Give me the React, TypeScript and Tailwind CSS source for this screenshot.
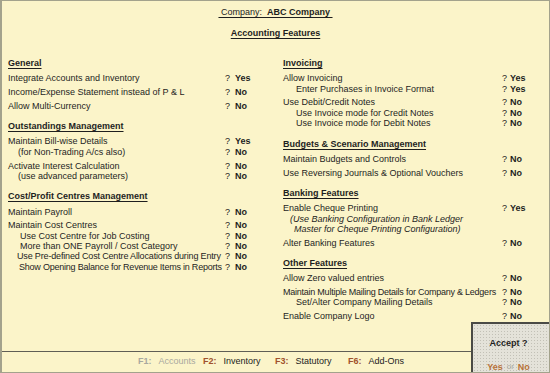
type Row = {
  label: string;
  value?: string;
  indent?: string;
  extra?: string;
};

type Section = { title: string; groups: Row[][] };

const leftSections: Section[] = [
  {
    title: "General",
    groups: [
      [{ label: "Integrate Accounts and Inventory", value: "Yes" }],
      [{ label: "Income/Expense Statement instead of P & L", value: "No" }],
      [{ label: "Allow Multi-Currency", value: "No" }],
    ],
  },
  {
    title: "Outstandings Management",
    groups: [
      [
        { label: "Maintain Bill-wise Details", value: "Yes" },
        { label: "(for Non-Trading A/cs also)", value: "No", indent: "pl-[10px]" },
      ],
      [
        { label: "Activate Interest Calculation", value: "No" },
        { label: "(use advanced parameters)", value: "No", indent: "pl-[10px]" },
      ],
    ],
  },
  {
    title: "Cost/Profit Centres Management",
    groups: [
      [{ label: "Maintain Payroll", value: "No" }],
      [
        { label: "Maintain Cost Centres", value: "No" },
        { label: "Use Cost Centre for Job Costing", value: "No", indent: "pl-[12px]" },
        { label: "More than ONE Payroll / Cost Category", value: "No", indent: "pl-[12px]" },
        {
          label: "Use Pre-defined Cost Centre Allocations during Entry",
          value: "No",
          indent: "pl-[9px]",
          extra: "tracking-[-0.16px]",
        },
        {
          label: "Show Opening Balance for Revenue Items in Reports",
          value: "No",
          indent: "pl-[11px]",
          extra: "tracking-[-0.22px]",
        },
      ],
    ],
  },
];

const rightSections: Section[] = [
  {
    title: "Invoicing",
    groups: [
      [
        { label: "Allow Invoicing", value: "Yes" },
        { label: "Enter Purchases in Invoice Format", value: "Yes", indent: "pl-[13px]" },
      ],
      [
        { label: "Use Debit/Credit Notes", value: "No" },
        { label: "Use Invoice mode for Credit Notes", value: "No", indent: "pl-[13px]" },
        { label: "Use Invoice mode for Debit Notes", value: "No", indent: "pl-[13px]" },
      ],
    ],
  },
  {
    title: "Budgets & Scenario Management",
    groups: [
      [{ label: "Maintain Budgets and Controls", value: "No" }],
      [{ label: "Use Reversing Journals & Optional Vouchers", value: "No" }],
    ],
  },
  {
    title: "Banking Features",
    groups: [
      [
        { label: "Enable Cheque Printing", value: "Yes" },
        { label: "(Use Banking Configuration in Bank Ledger", indent: "pl-[7px]", extra: "italic" },
        { label: "Master for Cheque Printing Configuration)", indent: "pl-[11px]", extra: "italic" },
      ],
      [{ label: "Alter Banking Features", value: "No" }],
    ],
  },
  {
    title: "Other Features",
    groups: [
      [{ label: "Allow Zero valued entries", value: "No" }],
      [
        {
          label: "Maintain Multiple Mailing Details for Company & Ledgers",
          value: "No",
          extra: "tracking-[-0.24px]",
        },
        { label: "Set/Alter Company Mailing Details", value: "No", indent: "pl-[13px]" },
      ],
      [{ label: "Enable Company Logo", value: "No" }],
    ],
  },
];

function FeatureColumn({ sections, labelWidth, qWidth }: { sections: Section[]; labelWidth: string; qWidth: string }) {
  return (
    <div className="flex flex-col">
      {sections.map((section, si) => (
        <div key={section.title} className={si > 0 ? "mt-[10px]" : ""}>
          <div className="mb-[4.8px] h-[10.4px] font-bold leading-[10.4px] underline decoration-1 underline-offset-[1.5px]">
            {section.title}
          </div>
          {section.groups.map((group, gi) => (
            <div key={gi} className={gi > 0 ? "mt-[3.4px]" : ""}>
              {group.map((row) => (
                <div key={row.label} className="flex h-[10.4px] items-center leading-[10.4px]">
                  <div className={`${labelWidth} shrink-0 whitespace-nowrap ${row.indent ?? ""} ${row.extra ?? ""}`}>
                    {row.label}
                  </div>
                  {row.value && (
                    <>
                      <span className={qWidth}>?</span>
                      <span className="font-bold">{row.value}</span>
                    </>
                  )}
                </div>
              ))}
            </div>
          ))}
        </div>
      ))}
    </div>
  );
}

const fkeys = [
  { key: "F1:", name: "Accounts", width: "w-[65px]", disabled: true },
  { key: "F2:", name: "Inventory", width: "w-[72px]" },
  { key: "F3:", name: "Statutory", width: "w-[73px]" },
  { key: "F6:", name: "Add-Ons", width: "w-[80px]" },
];

export default function App() {
  return (
    <div className="relative flex h-[373px] w-[550px] flex-col overflow-hidden border border-l-2 border-[#a3a28c] bg-[#fbf4c9] font-['Liberation_Sans',Arial,sans-serif] text-[9px] text-[#1e1e1e]">
      <div className="mt-[5.8px] flex h-[10.4px] justify-center leading-[10.4px]">
        <span className="whitespace-pre underline decoration-1 underline-offset-[1.5px]">
          {" Company:  "}
          <span className="font-bold">ABC Company </span>
        </span>
      </div>
      <div className="mt-[10.9px] flex h-[10.4px] justify-center font-bold leading-[10.4px] underline decoration-1 underline-offset-[1.5px]">
        Accounting Features
      </div>

      <div className="mt-[19.6px] flex flex-1">
        <div className="w-[273px] pl-[6px]">
          <FeatureColumn sections={leftSections} labelWidth="w-[217px]" qWidth="w-[10px]" />
        </div>
        <div className="flex-1 pl-[8px]">
          <FeatureColumn sections={rightSections} labelWidth="w-[219px]" qWidth="w-[8px]" />
        </div>
      </div>

      <div className="flex h-[21px] items-center border-t border-[#5f5e55] pl-[136px]">
        {fkeys.map((f) => (
          <div key={f.key} className={`${f.width} flex items-center`}>
            <span className={`mr-[7px] font-bold ${f.disabled ? "text-[#a8a8a0]" : "text-[#a0522d]"}`}>
              {f.key}
            </span>
            <span className={f.disabled ? "text-[#a8a8a0]" : "text-[#222]"}>{f.name}</span>
          </div>
        ))}
      </div>

      <div className="absolute right-[-1px] bottom-[-1px] flex h-[51px] w-[79px] flex-col items-center border-t-2 border-l-2 border-[#4a4a46] bg-[#e4e2d9] bg-[radial-gradient(#c2c0b6_0.7px,transparent_0.8px)] bg-[length:3px_3px] pr-[6px]">
        <div className="mt-[13.8px] h-[10.4px] font-bold leading-[10.4px]">Accept ?</div>
        <div className="mt-[13.6px] flex h-[10.4px] items-center gap-[4px] leading-[10.4px]">
          <span className="font-bold text-[#b8733a]">Yes</span>
          <span className="text-[8px] text-[#a8a8a0]">or</span>
          <span className="font-bold text-[#b8733a]">No</span>
        </div>
      </div>
    </div>
  );
}
